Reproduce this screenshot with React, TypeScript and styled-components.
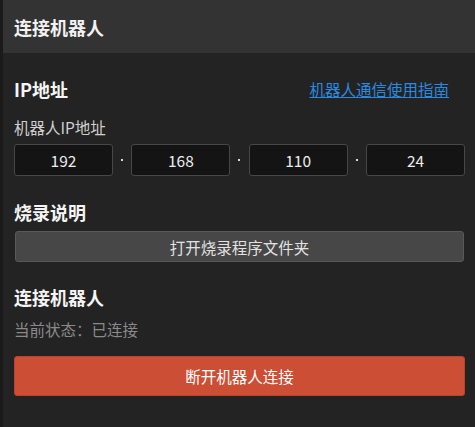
import * as React from 'react';
import styled, { createGlobalStyle } from 'styled-components';

const Global = createGlobalStyle`
  html, body {
    margin: 0;
    padding: 0;
    background: #232323;
  }
  body {
    font-family: "Noto Sans CJK SC", "Noto Sans", sans-serif;
  }
`;

const Shell = styled.div`
  display: flex;
  width: 475px;
  height: 427px;
  background: #232323;
  overflow: hidden;
`;

const Strip = styled.div`
  width: 3px;
  flex: 0 0 3px;
  background: #1a1a1a;
`;

const Main = styled.div`
  flex: 1;
  display: flex;
  flex-direction: column;
`;

const Header = styled.div`
  height: 53px;
  display: flex;
  align-items: center;
  padding-left: 11px;
  background: #333333;
  color: #f2f2f2;
  font-size: 18px;
  font-weight: 700;
`;

const Body = styled.div`
  padding: 0 10px 0 11px;
  display: flex;
  flex-direction: column;
`;

const HeadRow = styled.div<{ $top: number }>`
  margin-top: ${(p) => p.$top}px;
  height: 24px;
  display: flex;
  align-items: center;
  justify-content: space-between;
`;

const Title = styled.h2`
  margin: 0;
  font-size: 18px;
  line-height: 24px;
  font-weight: 700;
  color: #f5f5f5;
`;

const Link = styled.a`
  margin-right: 16px;
  font-size: 15.5px;
  color: #2a8ae0;
  text-decoration: underline;
  cursor: pointer;
`;

const Label = styled.div<{ $top: number; $muted?: boolean }>`
  margin-top: ${(p) => p.$top}px;
  font-size: 15.5px;
  line-height: 20px;
  color: ${(p) => (p.$muted ? '#8a8a8a' : '#d0d0d0')};
`;

const IpRow = styled.div`
  margin-top: 7px;
  display: flex;
  align-items: center;
`;

const IpBox = styled.input`
  box-sizing: border-box;
  width: 99px;
  height: 32px;
  background: #141414;
  border: 1px solid #474747;
  border-radius: 3px;
  color: #ededed;
  font-family: inherit;
  font-size: 15.5px;
  text-align: center;
  outline: none;
`;

const Dot = styled.span`
  flex: 1;
  display: flex;
  justify-content: center;
  &::before {
    content: '';
    width: 2px;
    height: 2px;
    background: #d8d8d8;
  }
`;

const Button = styled.button<{ $danger?: boolean; $top: number }>`
  margin: ${(p) => p.$top}px ${(p) => (p.$danger ? 0 : 1)}px 0;
  height: ${(p) => (p.$danger ? 40 : 31)}px;
  border-radius: 3px;
  border: 1px solid ${(p) => (p.$danger ? '#b9432d' : '#595959')};
  background: ${(p) => (p.$danger ? '#cc4e35' : '#474747')};
  color: ${(p) => (p.$danger ? '#ffffff' : '#e2e2e2')};
  font-family: inherit;
  font-size: 15.5px;
  cursor: pointer;
`;

const ip = ['192', '168', '110', '24'];

const App = () => (
  <>
    <Global />
    <Shell>
      <Strip />
      <Main>
        <Header>连接机器人</Header>
        <Body>
          <HeadRow $top={24}>
            <Title>IP地址</Title>
            <Link>机器人通信使用指南</Link>
          </HeadRow>
          <Label $top={16}>机器人IP地址</Label>
          <IpRow>
            {ip.map((v, i) => (
              <React.Fragment key={i}>
                {i > 0 && <Dot />}
                <IpBox defaultValue={v} />
              </React.Fragment>
            ))}
          </IpRow>
          <HeadRow $top={24}>
            <Title>烧录说明</Title>
          </HeadRow>
          <Button $top={7}>打开烧录程序文件夹</Button>
          <HeadRow $top={23}>
            <Title>连接机器人</Title>
          </HeadRow>
          <Label $top={10} $muted>
            当前状态：已连接
          </Label>
          <Button $top={17} $danger>
            断开机器人连接
          </Button>
        </Body>
      </Main>
    </Shell>
  </>
);

export default App;
